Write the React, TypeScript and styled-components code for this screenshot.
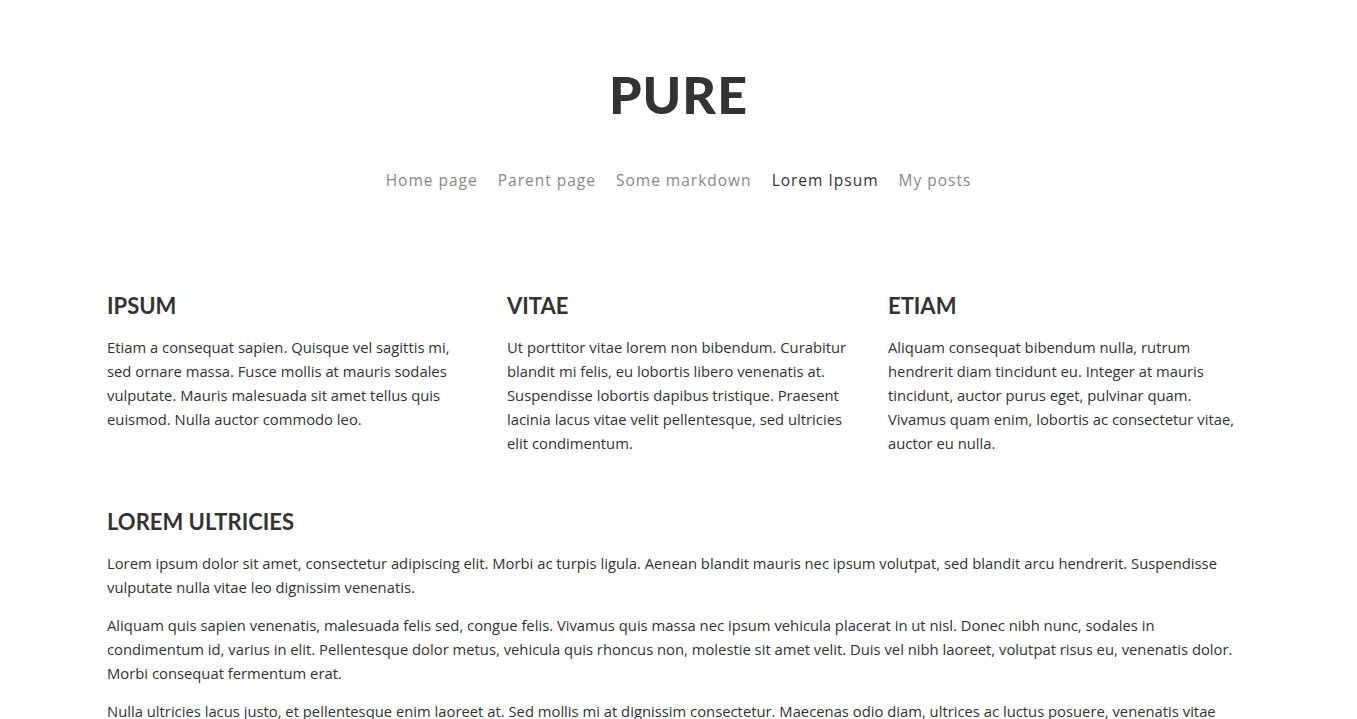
import styled, { createGlobalStyle } from 'styled-components';

const GlobalStyle = createGlobalStyle`
	html, body {
		margin: 0;
		padding: 0;
		background: #fff;
	}

	body {
		font-family: 'Open Sans', 'Liberation Sans', sans-serif;
		color: #333;
	}
`;

const Header = styled.header`
	display: flex;
	flex-direction: column;
	align-items: center;
	padding-top: 66px;
`;

const Title = styled.h1`
	margin: 0;
	font-family: Lato, 'Liberation Sans', sans-serif;
	font-weight: 900;
	font-size: 52px;
	line-height: 56px;
	letter-spacing: 1px;
	color: #333;
`;

const Nav = styled.nav`
	display: flex;
	gap: 20px;
	margin-top: 46px;
`;

const NavLink = styled.a<{ $active?: boolean }>`
	font-size: 15.5px;
	line-height: 24px;
	letter-spacing: 1px;
	text-decoration: none;
	color: ${({ $active }) => ($active ? '#333' : '#888')};
	cursor: pointer;
`;

const Main = styled.main`
	width: 1143px;
	margin: 0 auto;
	padding-top: 99px;
`;

const Columns = styled.div`
	display: grid;
	grid-template-columns: 400px 381px 362px;
`;

const Column = styled.section`
	padding-right: 40px;

	&:last-child {
		padding-right: 0;
	}
`;

const Heading = styled.h2`
	margin: 0 0 14px;
	font-family: Lato, 'Liberation Sans', sans-serif;
	font-weight: 700;
	font-size: 22px;
	line-height: 30px;
	color: #333;
`;

const Text = styled.p`
	margin: 0 0 14px;
	font-size: 14.8px;
	line-height: 24px;
	color: #333;
`;

const Article = styled.article`
	margin-top: 38px;
`;

const navItems = ['Home page', 'Parent page', 'Some markdown', 'Lorem Ipsum', 'My posts'];

const columns = [
	{
		title: 'IPSUM',
		text: 'Etiam a consequat sapien. Quisque vel sagittis mi, sed ornare massa. Fusce mollis at mauris sodales vulputate. Mauris malesuada sit amet tellus quis euismod. Nulla auctor commodo leo.',
	},
	{
		title: 'VITAE',
		text: 'Ut porttitor vitae lorem non bibendum. Curabitur blandit mi felis, eu lobortis libero venenatis at. Suspendisse lobortis dapibus tristique. Praesent lacinia lacus vitae velit pellentesque, sed ultricies elit condimentum.',
	},
	{
		title: 'ETIAM',
		text: 'Aliquam consequat bibendum nulla, rutrum hendrerit diam tincidunt eu. Integer at mauris tincidunt, auctor purus eget, pulvinar quam. Vivamus quam enim, lobortis ac consectetur vitae, auctor eu nulla.',
	},
];

const paragraphs = [
	'Lorem ipsum dolor sit amet, consectetur adipiscing elit. Morbi ac turpis ligula. Aenean blandit mauris nec ipsum volutpat, sed blandit arcu hendrerit. Suspendisse vulputate nulla vitae leo dignissim venenatis.',
	'Aliquam quis sapien venenatis, malesuada felis sed, congue felis. Vivamus quis massa nec ipsum vehicula placerat in ut nisl. Donec nibh nunc, sodales in condimentum id, varius in elit. Pellentesque dolor metus, vehicula quis rhoncus non, molestie sit amet velit. Duis vel nibh laoreet, volutpat risus eu, venenatis dolor. Morbi consequat fermentum erat.',
	'Nulla ultricies lacus justo, et pellentesque enim laoreet at. Sed mollis mi at dignissim consectetur. Maecenas odio diam, ultrices ac luctus posuere, venenatis vitae ligula. Nunc tincidunt, nulla a semper ornare, nisl nisi feugiat diam, vitae lacinia augue dolor id est.',
];

const App = () => (
	<>
		<GlobalStyle />
		<Header>
			<Title>PURE</Title>
			<Nav>
				{navItems.map((item) => (
					<NavLink key={item} $active={item === 'Lorem Ipsum'}>
						{item}
					</NavLink>
				))}
			</Nav>
		</Header>
		<Main>
			<Columns>
				{columns.map((col) => (
					<Column key={col.title}>
						<Heading>{col.title}</Heading>
						<Text>{col.text}</Text>
					</Column>
				))}
			</Columns>
			<Article>
				<Heading>LOREM ULTRICIES</Heading>
				{paragraphs.map((p) => (
					<Text key={p.slice(0, 12)}>{p}</Text>
				))}
			</Article>
		</Main>
	</>
);

export default App;
